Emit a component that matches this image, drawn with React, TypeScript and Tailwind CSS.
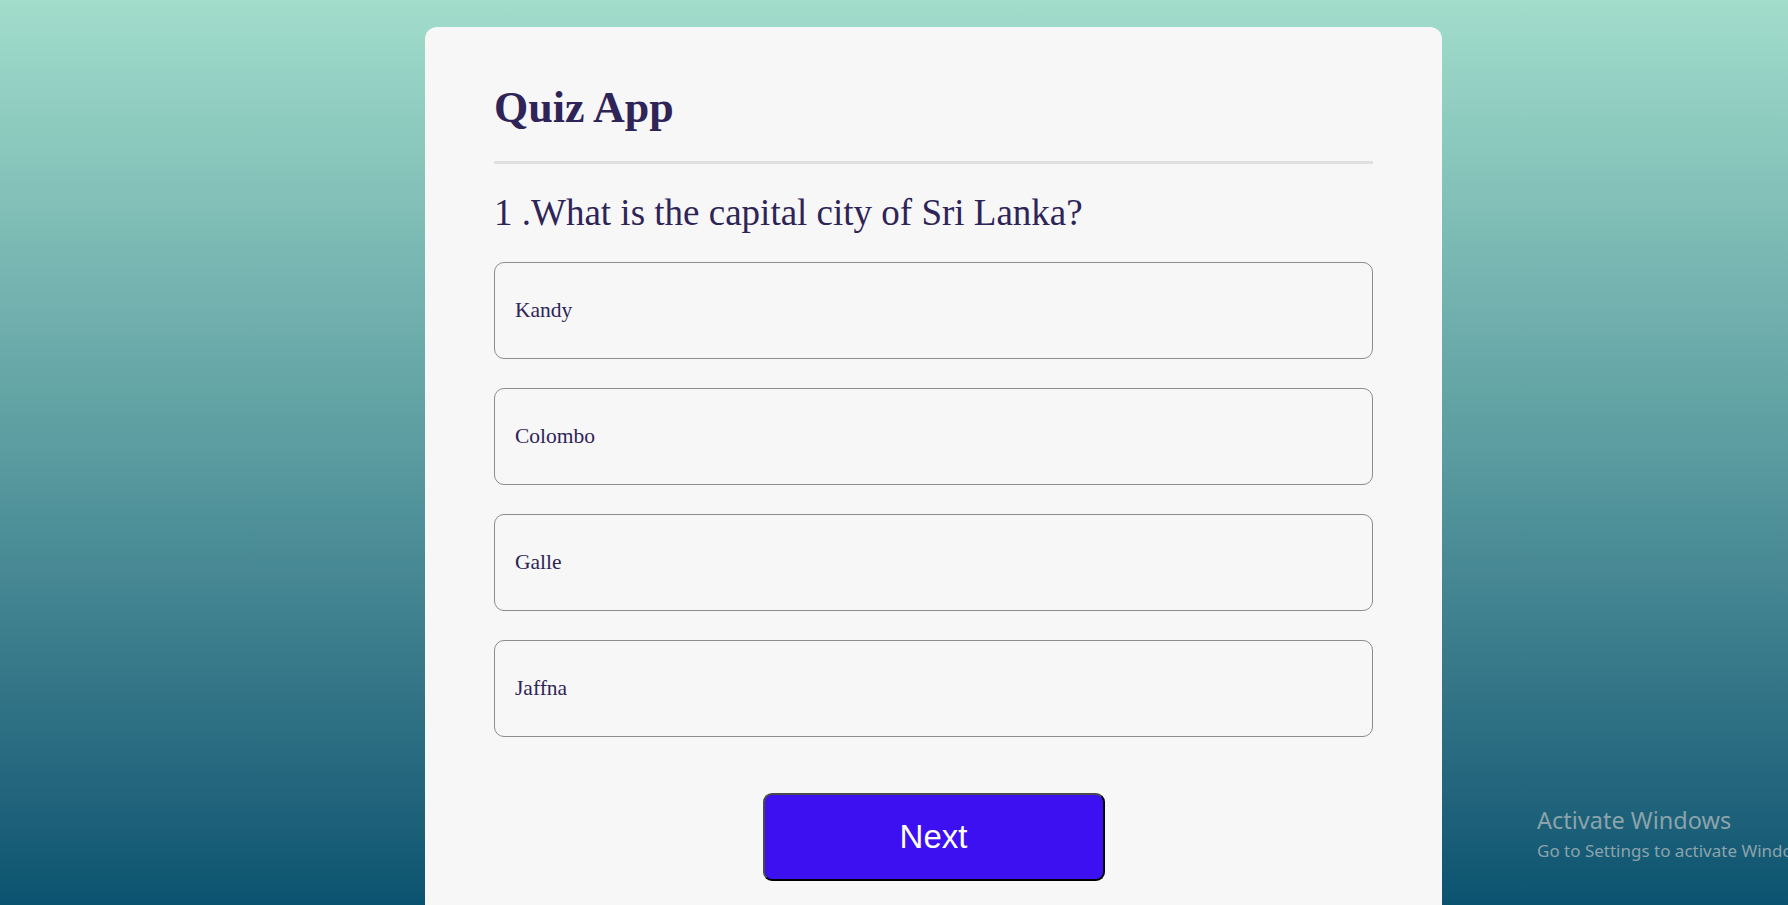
import React from "react";

const options = ["Kandy", "Colombo", "Galle", "Jaffna"];

export default function App() {
  return (
    <div className="relative h-[905px] w-full overflow-hidden bg-gradient-to-b from-[#a2ddcb] via-[#5a9ca0] to-[#0a5370]">
      <div className="ml-[425px] mt-[27px] w-[1017px] h-[900px] rounded-[12px] bg-[#f7f7f7] px-[69px] pt-[59px] text-[#2f2458] [font-family:'Liberation_Serif','Times_New_Roman',serif]">
        <h1 className="text-[44px] font-bold leading-none">Quiz App</h1>
        <div className="mt-[31px] h-[3px] w-full bg-[#e0e0e0]" />
        <h2 className="mt-[30px] text-[37px] leading-none font-normal">1 .What is the capital city of Sri Lanka?</h2>
        <div className="mt-[31px] flex flex-col gap-[29px]">
          {options.map((o) => (
            <div
              key={o}
              className="flex h-[97px] items-center rounded-[10px] border border-[#8c8c8c] px-[20px] text-[21.5px]"
            >
              {o}
            </div>
          ))}
        </div>
        <div className="mt-[56px] flex justify-center">
          <button className="h-[88px] w-[342px] rounded-[9px] border-2 border-[#4a4a4a] border-b-black border-r-black bg-[#3c10f0] text-[33px] text-white [font-family:'Liberation_Sans',Arial,sans-serif]">
            Next
          </button>
        </div>
      </div>
      <div className="pointer-events-none absolute left-[1537px] top-[804px] whitespace-nowrap text-[#8ba3ab] [font-family:'Noto_Sans','Open_Sans',sans-serif]">
        <div className="text-[23.5px] leading-[32px]">Activate Windows</div>
        <div className="mt-[3px] text-[17px] leading-[24px]">Go to Settings to activate Windows.</div>
      </div>
    </div>
  );
}
